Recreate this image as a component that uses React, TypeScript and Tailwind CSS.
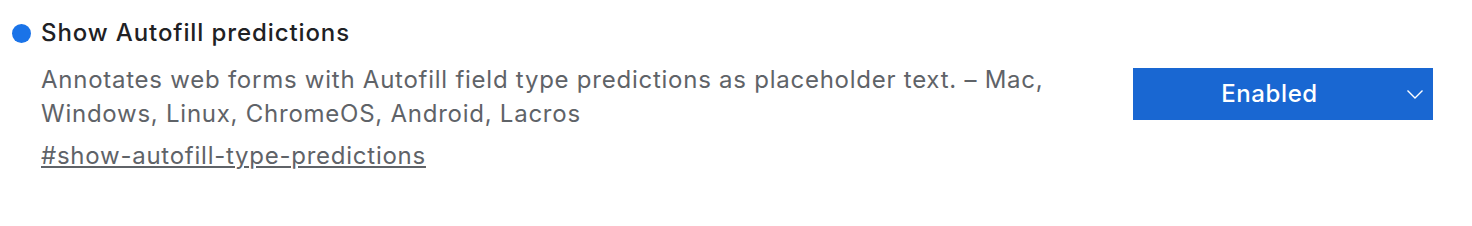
import React from "react";

export default function App() {
  return (
    <div className="h-[226px] w-full bg-white font-['Inter',sans-serif]">
      <div className="flex items-start pl-[12px] pr-[39px] pt-[20px]">
        <div className="flex-1">
          <div className="flex items-center gap-[10px]">
            <span className="h-[19px] w-[19px] rounded-full bg-[#1a73e8]" />
            <h2 className="text-[24px] font-medium leading-[26px] tracking-[0.9px] text-[#202124]">
              Show Autofill predictions
            </h2>
          </div>
          <p className="mt-[17px] max-w-[1050px] pl-[29px] text-[24px] leading-[34px] tracking-[0.75px] text-[#5f6368]">
            Annotates web forms with Autofill field type predictions as placeholder text. – Mac, Windows, Linux, ChromeOS, Android, Lacros
          </p>
          <a className="mt-[8px] block pl-[29px] text-[24px] leading-[34px] tracking-[0.75px] text-[#5f6368] underline">
            #show-autofill-type-predictions
          </a>
        </div>
        <div className="mt-[48px] flex h-[52px] w-[300px] items-center bg-[#1967d2] pr-[9px] text-white">
          <span className="flex-1 text-center text-[24px] font-medium tracking-[0.6px]">Enabled</span>
          <svg width="18" height="18" viewBox="0 0 18 18" fill="none" stroke="white" strokeWidth="1.4">
            <path d="M1.5 5.5l7.5 7.5 7.5-7.5" />
          </svg>
        </div>
      </div>
    </div>
  );
}
